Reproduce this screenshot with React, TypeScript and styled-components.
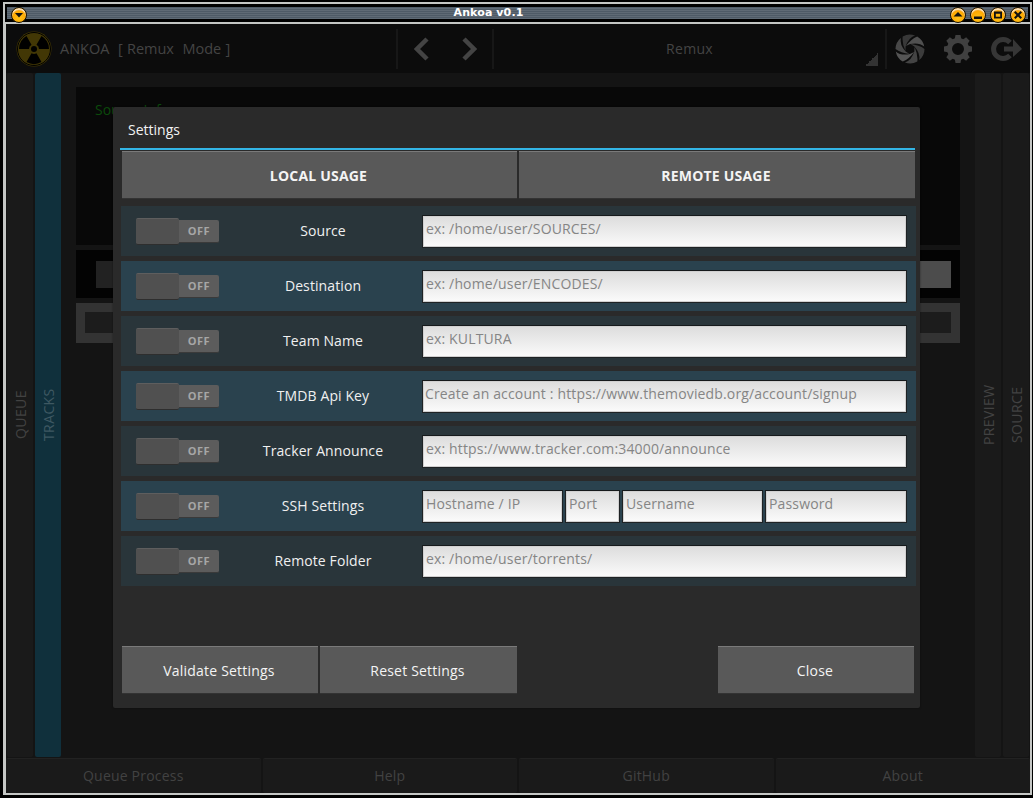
import React, { FunctionComponent } from 'react';
import styled, { createGlobalStyle } from 'styled-components';

const GlobalStyle = createGlobalStyle`
  html, body {
    margin: 0;
    height: 798px;
    overflow: hidden;
    background: #000;
    font-family: "Open Sans", "Noto Sans", sans-serif;
    font-size: 14px;
  }
  * {
    box-sizing: border-box;
  }
`;

const Frame = styled.div`
  margin: 2px 1px 0 3px;
  height: 793px;
  border: solid #c4c6c4;
  border-width: 2px 2px 2px 3px;
  display: flex;
  flex-direction: column;
  background: #000;
`;

const TitleBar = styled.div`
  height: 18px;
  flex: none;
  margin-left: -1px;
  padding: 3px 2px 0;
  background: #000;
`;

const TitleStripes = styled.div`
  height: 12px;
  display: flex;
  align-items: flex-start;
  background: repeating-linear-gradient(to bottom, #4e5a66 0, #4e5a66 1px, #5f6a75 1px, #5f6a75 2px);
`;

const TitleText = styled.div`
  flex: 1;
  text-align: center;
  color: #fff;
  font-family: "DejaVu Sans", sans-serif;
  font-weight: bold;
  font-size: 11px;
  line-height: 12px;
  letter-spacing: 0.1px;
`;

const WindowButtons = styled.div`
  display: flex;
  gap: 4px;
  margin-right: 2px;
`;

const WindowButton = styled.div<{ $left?: boolean }>`
  position: relative;
  z-index: 2;
  width: 16px;
  height: 16px;
  margin-left: ${(p) => (p.$left ? '4px' : '0')};
  border-radius: 50%;
  border: 1px solid #1a1200;
  background: radial-gradient(circle at 50% 72%, #ffc21a 0, #ffa800 55%, #e07a00 100%);
  box-shadow: inset 0 2px 1px rgba(255, 255, 255, 0.75);
  display: flex;
  align-items: center;
  justify-content: center;
`;

const TitleRule = styled.div`
  height: 2px;
  flex: none;
  margin-left: -3px;
  background: #c4c6c4;
`;

const Content = styled.div`
  position: relative;
  flex: 1;
  display: flex;
  flex-direction: column;
  background: #141414;
  min-height: 0;
`;

const Toolbar = styled.div`
  height: 49px;
  flex: none;
  display: flex;
  align-items: center;
  background: #0c0c0c;
  color: #444;
`;

const Brand = styled.div`
  width: 390px;
  height: 40px;
  padding-left: 10px;
  display: flex;
  align-items: center;
  gap: 8px;
  font-size: 14.5px;
  word-spacing: 0.5px;
  white-space: pre;
`;

const NavGroup = styled.div`
  width: 98px;
  height: 40px;
  display: flex;
  align-items: center;
  justify-content: space-around;
  padding: 0 0 0 1px;
  border: solid #171717;
  border-width: 0 2px;
`;

const Combo = styled.div`
  position: relative;
  flex: 1;
  height: 40px;
  display: flex;
  align-items: center;
  justify-content: center;
  border-right: 2px solid #171717;
  font-size: 14px;
  letter-spacing: 0.3px;
`;

const ComboArrow = styled.div`
  position: absolute;
  right: 7px;
  bottom: 3px;
  width: 13px;
  height: 13px;
  background: linear-gradient(to bottom right, transparent 50%, #333 50%);
`;

const ToolActions = styled.div`
  width: 143px;
  display: flex;
  align-items: center;
  gap: 18px;
  padding-left: 8px;
`;

const Body = styled.div`
  flex: 1;
  min-height: 0;
  padding: 0 1px;
  display: grid;
  grid-template-columns: 26px 26px 1fr 26px 26px;
  column-gap: 2px;
`;

const SideTab = styled.div<{ $active?: boolean }>`
  display: flex;
  align-items: center;
  justify-content: center;
  writing-mode: vertical-rl;
  transform: rotate(180deg);
  border-radius: 2px;
  background: ${(p) => (p.$active ? '#10303c' : '#1a1a1a')};
  color: ${(p) => (p.$active ? '#3e5862' : '#424242')};
  font-size: 14px;
  letter-spacing: 0.4px;
`;

const Main = styled.div`
  margin: 0 -2px;
  padding: 14px 15px 0;
  display: flex;
  flex-direction: column;
  gap: 5px;
  background: #141414;
`;

const InfoPanel = styled.div`
  height: 158px;
  padding: 14px 19px;
  background: #080808;
  color: #0b4a0b;
  font-size: 14px;
  line-height: 18px;
`;

const ProgressPanel = styled.div`
  height: 48px;
  padding: 11px 9px 10px 20px;
  background: #030303;
`;

const ProgressTrack = styled.div`
  height: 27px;
  background: linear-gradient(to right, #222 50%, #4c4c4c 50%);
`;

const SeekPanel = styled.div`
  height: 40px;
  padding: 9px;
  background: #333;
`;

const SeekTrack = styled.div`
  height: 21px;
  background: #1c1c1c;
`;

const BottomBar = styled.div`
  height: 35px;
  flex: none;
  margin-top: 1px;
  display: grid;
  grid-template-columns: repeat(4, 1fr);
  column-gap: 2px;
`;

const BottomButton = styled.div`
  display: flex;
  align-items: center;
  justify-content: center;
  padding-bottom: 2px;
  background: #1a1a1a;
  border-top: 1px solid #222;
  border-radius: 2px;
  color: #424242;
  font-size: 14px;
  letter-spacing: 0.2px;
`;

const Modal = styled.div`
  position: absolute;
  left: 107px;
  top: 83px;
  width: 807px;
  height: 601px;
  padding: 0 5px 14px 7px;
  display: flex;
  flex-direction: column;
  background: #2a2a2a;
  border-radius: 2px;
  box-shadow: 0 0 2px rgba(0, 0, 0, 0.5);
`;

const ModalTitle = styled.div`
  height: 43px;
  flex: none;
  padding: 4px 0 0 8px;
  display: flex;
  align-items: center;
  color: #f2f2f2;
  font-size: 14px;
  border-bottom: 2px solid #33b5e5;
`;

const TabRow = styled.div`
  margin: 1px 0 0 2px;
  height: 48px;
  flex: none;
  display: grid;
  grid-template-columns: 395px 1fr;
  column-gap: 2px;
`;

const GreyButton = styled.div<{ $bold?: boolean }>`
  display: flex;
  align-items: center;
  justify-content: center;
  padding-right: 2px;
  background: #595959;
  border-top: 1px solid #7a7a7a;
  border-bottom: 1px solid #333;
  color: #f4f4f4;
  font-weight: ${(p) => (p.$bold ? 'bold' : 'normal')};
  font-size: 14px;
  letter-spacing: 0.2px;
`;

const RowList = styled.div`
  margin: 7px -1px 0 1px;
  display: flex;
  flex-direction: column;
  gap: 5px;
`;

const SettingRow = styled.div<{ $alt?: boolean }>`
  height: 50px;
  padding: 0 9px 0 15px;
  display: grid;
  grid-template-columns: 83px 203px 1fr;
  align-items: center;
  background: ${(p) => (p.$alt ? '#2a424e' : '#29353a')};
`;

const Toggle = styled.div`
  display: flex;
  align-items: center;
`;

const ToggleKnob = styled.div`
  width: 43px;
  height: 27px;
  background: #505050;
  border-top: 1px solid #5e5e5e;
  border-bottom: 1px solid #2e2e2e;
  border-radius: 2px;
`;

const ToggleTrack = styled.div`
  width: 40px;
  height: 23px;
  display: flex;
  align-items: center;
  justify-content: center;
  background: #5c5c5c;
  border-bottom: 1px solid #3a3a3a;
  border-radius: 0 2px 2px 0;
  color: #a6a6a6;
  font-size: 11px;
  font-weight: bold;
  letter-spacing: 0.5px;
`;

const RowLabel = styled.div`
  padding: 0 0 2px 5px;
  text-align: center;
  color: #f0f0f0;
  font-size: 14px;
  letter-spacing: 0.1px;
`;

const InputGroup = styled.div<{ $columns?: string }>`
  display: grid;
  grid-template-columns: ${(p) => p.$columns || '1fr'};
  column-gap: 2px;
`;

const TextInput = styled.input<{ $tight?: boolean }>`
  width: 100%;
  height: 33px;
  padding: 0 0 6px ${(p) => (p.$tight ? '2px' : '3px')};
  border: 1px solid #1e2224;
  border-top-color: #15191b;
  outline: none;
  background: linear-gradient(to bottom, #dcdcdc, #fbfbfb);
  box-shadow: inset 0 0 0 1px #d0d0d0;
  font-family: "Open Sans", "Noto Sans", sans-serif;
  font-size: 14px;
  letter-spacing: 0.15px;
  &::placeholder {
    color: #858585;
    opacity: 1;
  }
`;

const ModalFooter = styled.div`
  margin-top: auto;
  padding: 0 1px 0 2px;
  height: 48px;
  flex: none;
  display: grid;
  grid-template-columns: 196px 197px 1fr 196px;
  column-gap: 2px;
`;

const Spacer = styled.div``;

const BLADE = 'M-2.5-4.33L-7.5-13A15 15 0 0 1 7.5-13L2.5-4.33A5 5 0 0 0-2.5-4.33Z';

const RadiationLogo: FunctionComponent = () => (
  <svg width="36" height="36" viewBox="-18 -18 36 36">
    <circle r="17.5" fill="#423705" />
    <circle r="16.5" fill="none" stroke="#000" strokeWidth="1" />
    <circle r="3" fill="#000" />
    {[60, 180, 300].map((angle) => (
      <path key={angle} d={BLADE} fill="#000" transform={`rotate(${angle})`} />
    ))}
  </svg>
);

const Chevron: FunctionComponent<{ right?: boolean }> = ({ right }) => (
  <svg width="16" height="24" viewBox="0 0 16 24">
    <polyline
      points={right ? '3,2 13,12 3,22' : '13,2 3,12 13,22'}
      fill="none"
      stroke="#444"
      strokeWidth="4.5"
    />
  </svg>
);

const ShutterIcon: FunctionComponent = () => (
  <svg width="30" height="30" viewBox="-15 -15 30 30">
    {[0, 60, 120, 180, 240, 300].map((angle, i) => (
      <path
        key={angle}
        d="M0-5Q9-7 14.2-2.4A14.5 14.5 0 0 0 7.2-12.6Q1-10-4.1-2.9Z"
        fill={['#505050', '#3c3c3c', '#444', '#555', '#484848', '#383838'][i]}
        transform={`rotate(${angle})`}
      />
    ))}
  </svg>
);

const GearIcon: FunctionComponent = () => (
  <svg width="30" height="30" viewBox="-15 -15 30 30">
    {[0, 45, 90, 135, 180, 225, 270, 315].map((angle) => (
      <path key={angle} d="M-2.5-14H2.5L3.5-9H-3.5Z" fill="#404040" transform={`rotate(${angle})`} />
    ))}
    <circle r="8.5" fill="none" stroke="#404040" strokeWidth="5" />
  </svg>
);

const ExitIcon: FunctionComponent = () => (
  <svg width="32" height="26" viewBox="0 0 32 26">
    <path d="M19 6.5A9.5 9.5 0 1 0 19 19.5" fill="none" stroke="#363636" strokeWidth="5" />
    <path d="M13 10.5H22V3L31 13L22 21V15.5H13Z" fill="#363636" />
  </svg>
);

const WindowGlyph: FunctionComponent<{ d: string }> = ({ d }) => (
  <svg width="10" height="10" viewBox="0 0 10 10">
    <path d={d} fill="#111" fillRule="evenodd" />
  </svg>
);

const GLYPHS = {
  down: 'M1 3H9L5 7.5Z',
  up: 'M5 2L9.5 6.5H.5Z',
  minimize: 'M1 6.5H9V9H1Z',
  maximize: 'M1 1.5H9V8.5H1ZM2.8 3.8V6.7H7.2V3.8Z',
  close: 'M1 2.5L2.5 1L5 3.5L7.5 1L9 2.5L6.5 5L9 7.5L7.5 9L5 6.5L2.5 9L1 7.5L3.5 5Z',
};

interface Setting {
  label: string;
  placeholders: string[];
  columns?: string;
  tight?: boolean;
}

const SETTINGS: Setting[] = [
  { label: 'Source', placeholders: ['ex: /home/user/SOURCES/'] },
  { label: 'Destination', placeholders: ['ex: /home/user/ENCODES/'] },
  { label: 'Team Name', placeholders: ['ex: KULTURA'] },
  {
    label: 'TMDB Api Key',
    placeholders: ['Create an account : https://www.themoviedb.org/account/signup'],
    tight: true,
  },
  { label: 'Tracker Announce', placeholders: ['ex: https://www.tracker.com:34000/announce'] },
  {
    label: 'SSH Settings',
    placeholders: ['Hostname / IP', 'Port', 'Username', 'Password'],
    columns: '141px 55px 141px 1fr',
  },
  { label: 'Remote Folder', placeholders: ['ex: /home/user/torrents/'] },
];

const App: FunctionComponent = () => {
  return (
    <>
      <GlobalStyle />
      <Frame>
        <TitleBar>
          <TitleStripes>
            <WindowButton $left>
              <WindowGlyph d={GLYPHS.down} />
            </WindowButton>
            <TitleText>Ankoa v0.1</TitleText>
            <WindowButtons>
              <WindowButton>
                <WindowGlyph d={GLYPHS.up} />
              </WindowButton>
              <WindowButton>
                <WindowGlyph d={GLYPHS.minimize} />
              </WindowButton>
              <WindowButton>
                <WindowGlyph d={GLYPHS.maximize} />
              </WindowButton>
              <WindowButton>
                <WindowGlyph d={GLYPHS.close} />
              </WindowButton>
            </WindowButtons>
          </TitleStripes>
        </TitleBar>
        <TitleRule />
        <Content>
          <Toolbar>
            <Brand>
              <RadiationLogo />
              ANKOA  [ Remux  Mode ]
            </Brand>
            <NavGroup>
              <Chevron />
              <Chevron right />
            </NavGroup>
            <Combo>
              Remux
              <ComboArrow />
            </Combo>
            <ToolActions>
              <ShutterIcon />
              <GearIcon />
              <ExitIcon />
            </ToolActions>
          </Toolbar>
          <Body>
            <SideTab>QUEUE</SideTab>
            <SideTab $active>TRACKS</SideTab>
            <Main>
              <InfoPanel>Source Infos</InfoPanel>
              <ProgressPanel>
                <ProgressTrack />
              </ProgressPanel>
              <SeekPanel>
                <SeekTrack />
              </SeekPanel>
            </Main>
            <SideTab>PREVIEW</SideTab>
            <SideTab>SOURCE</SideTab>
          </Body>
          <BottomBar>
            <BottomButton>Queue Process</BottomButton>
            <BottomButton>Help</BottomButton>
            <BottomButton>GitHub</BottomButton>
            <BottomButton>About</BottomButton>
          </BottomBar>
          <Modal>
            <ModalTitle>Settings</ModalTitle>
            <TabRow>
              <GreyButton $bold>LOCAL USAGE</GreyButton>
              <GreyButton $bold>REMOTE USAGE</GreyButton>
            </TabRow>
            <RowList>
              {SETTINGS.map((setting, i) => (
                <SettingRow key={setting.label} $alt={i % 2 === 1}>
                  <Toggle>
                    <ToggleKnob />
                    <ToggleTrack>OFF</ToggleTrack>
                  </Toggle>
                  <RowLabel>{setting.label}</RowLabel>
                  <InputGroup $columns={setting.columns}>
                    {setting.placeholders.map((placeholder) => (
                      <TextInput key={placeholder} placeholder={placeholder} $tight={setting.tight} />
                    ))}
                  </InputGroup>
                </SettingRow>
              ))}
            </RowList>
            <ModalFooter>
              <GreyButton>Validate Settings</GreyButton>
              <GreyButton>Reset Settings</GreyButton>
              <Spacer />
              <GreyButton>Close</GreyButton>
            </ModalFooter>
          </Modal>
        </Content>
      </Frame>
    </>
  );
};

export default App;
